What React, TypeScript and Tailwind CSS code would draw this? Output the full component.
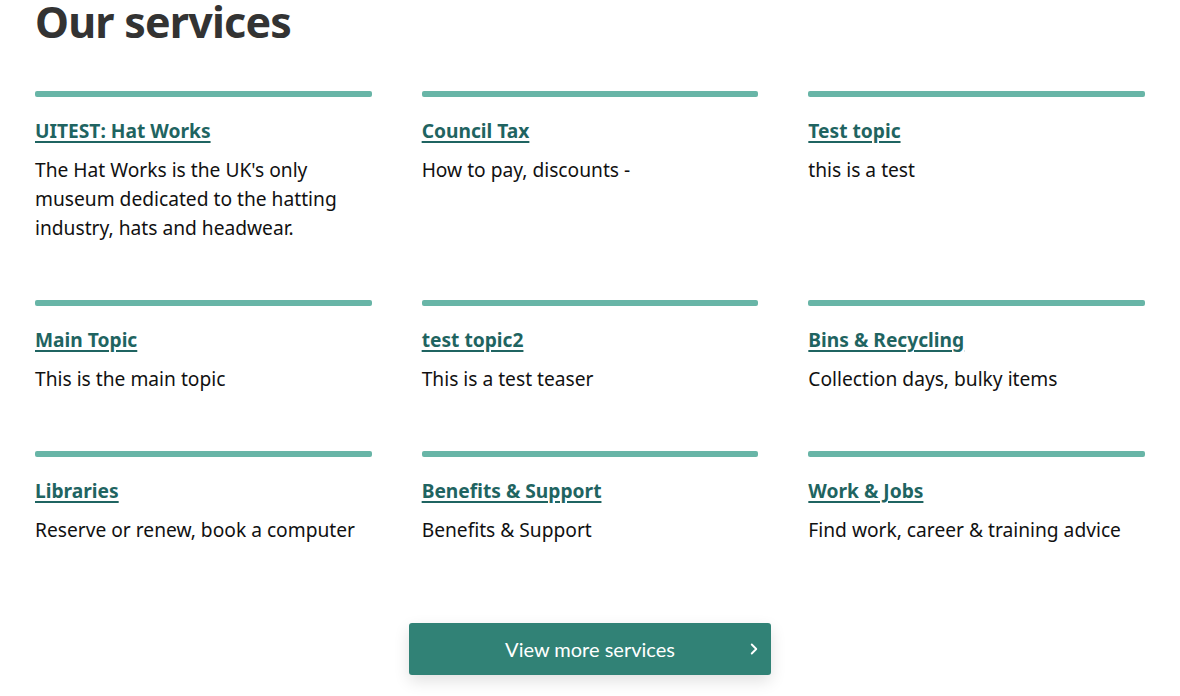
import React from 'react';
import { ChevronRight } from 'lucide-react';

interface Service {
  title: string;
  teaser: string;
}

const services: Service[] = [
  { title: 'UITEST: Hat Works', teaser: "The Hat Works is the UK's only museum dedicated to the hatting industry, hats and headwear." },
  { title: 'Council Tax', teaser: 'How to pay, discounts -' },
  { title: 'Test topic', teaser: 'this is a test' },
  { title: 'Main Topic', teaser: 'This is the main topic' },
  { title: 'test topic2', teaser: 'This is a test teaser' },
  { title: 'Bins & Recycling', teaser: 'Collection days, bulky items' },
  { title: 'Libraries', teaser: 'Reserve or renew, book a computer' },
  { title: 'Benefits & Support', teaser: 'Benefits & Support' },
  { title: 'Work & Jobs', teaser: 'Find work, career & training advice' },
];

const ServiceCard: React.FC<{ service: Service }> = ({ service }) => (
  <div className="pb-[58px]">
    <div className="h-[6px] rounded-[2px] bg-[#68b5a7]" />
    <a
      href="#"
      className="mt-[19px] inline-block text-[19.2px] font-bold leading-[30px] text-[#1f6461] underline underline-offset-[3px] decoration-[1.5px]"
    >
      {service.title}
    </a>
    <p className="mt-[9px] text-[19.2px] leading-[29px] text-[#111]">{service.teaser}</p>
  </div>
);

export default function App() {
  return (
    <div className="min-h-[696px] bg-white font-['Noto_Sans',sans-serif]">
      <div className="mx-auto w-[1110px]">
        <h1 className="text-[43px] font-bold leading-[44px] tracking-[-0.8px] text-[#333]">Our services</h1>
        <div className="mt-[47px] grid grid-cols-3 gap-x-[50px]">
          {services.map((s) => (
            <ServiceCard key={s.title} service={s} />
          ))}
        </div>
        <div className="flex justify-center pt-[21px]">
          <a
            href="#"
            className="relative flex h-[52px] w-[362px] items-center justify-center rounded-[3px] bg-[#318276] text-[20px] text-white shadow-[0_6px_16px_rgba(0,0,0,0.12)] font-['Lato',sans-serif]"
          >
            View more services
            <ChevronRight className="absolute right-[8px] h-[18px] w-[18px]" strokeWidth={2.5} />
          </a>
        </div>
      </div>
    </div>
  );
}
